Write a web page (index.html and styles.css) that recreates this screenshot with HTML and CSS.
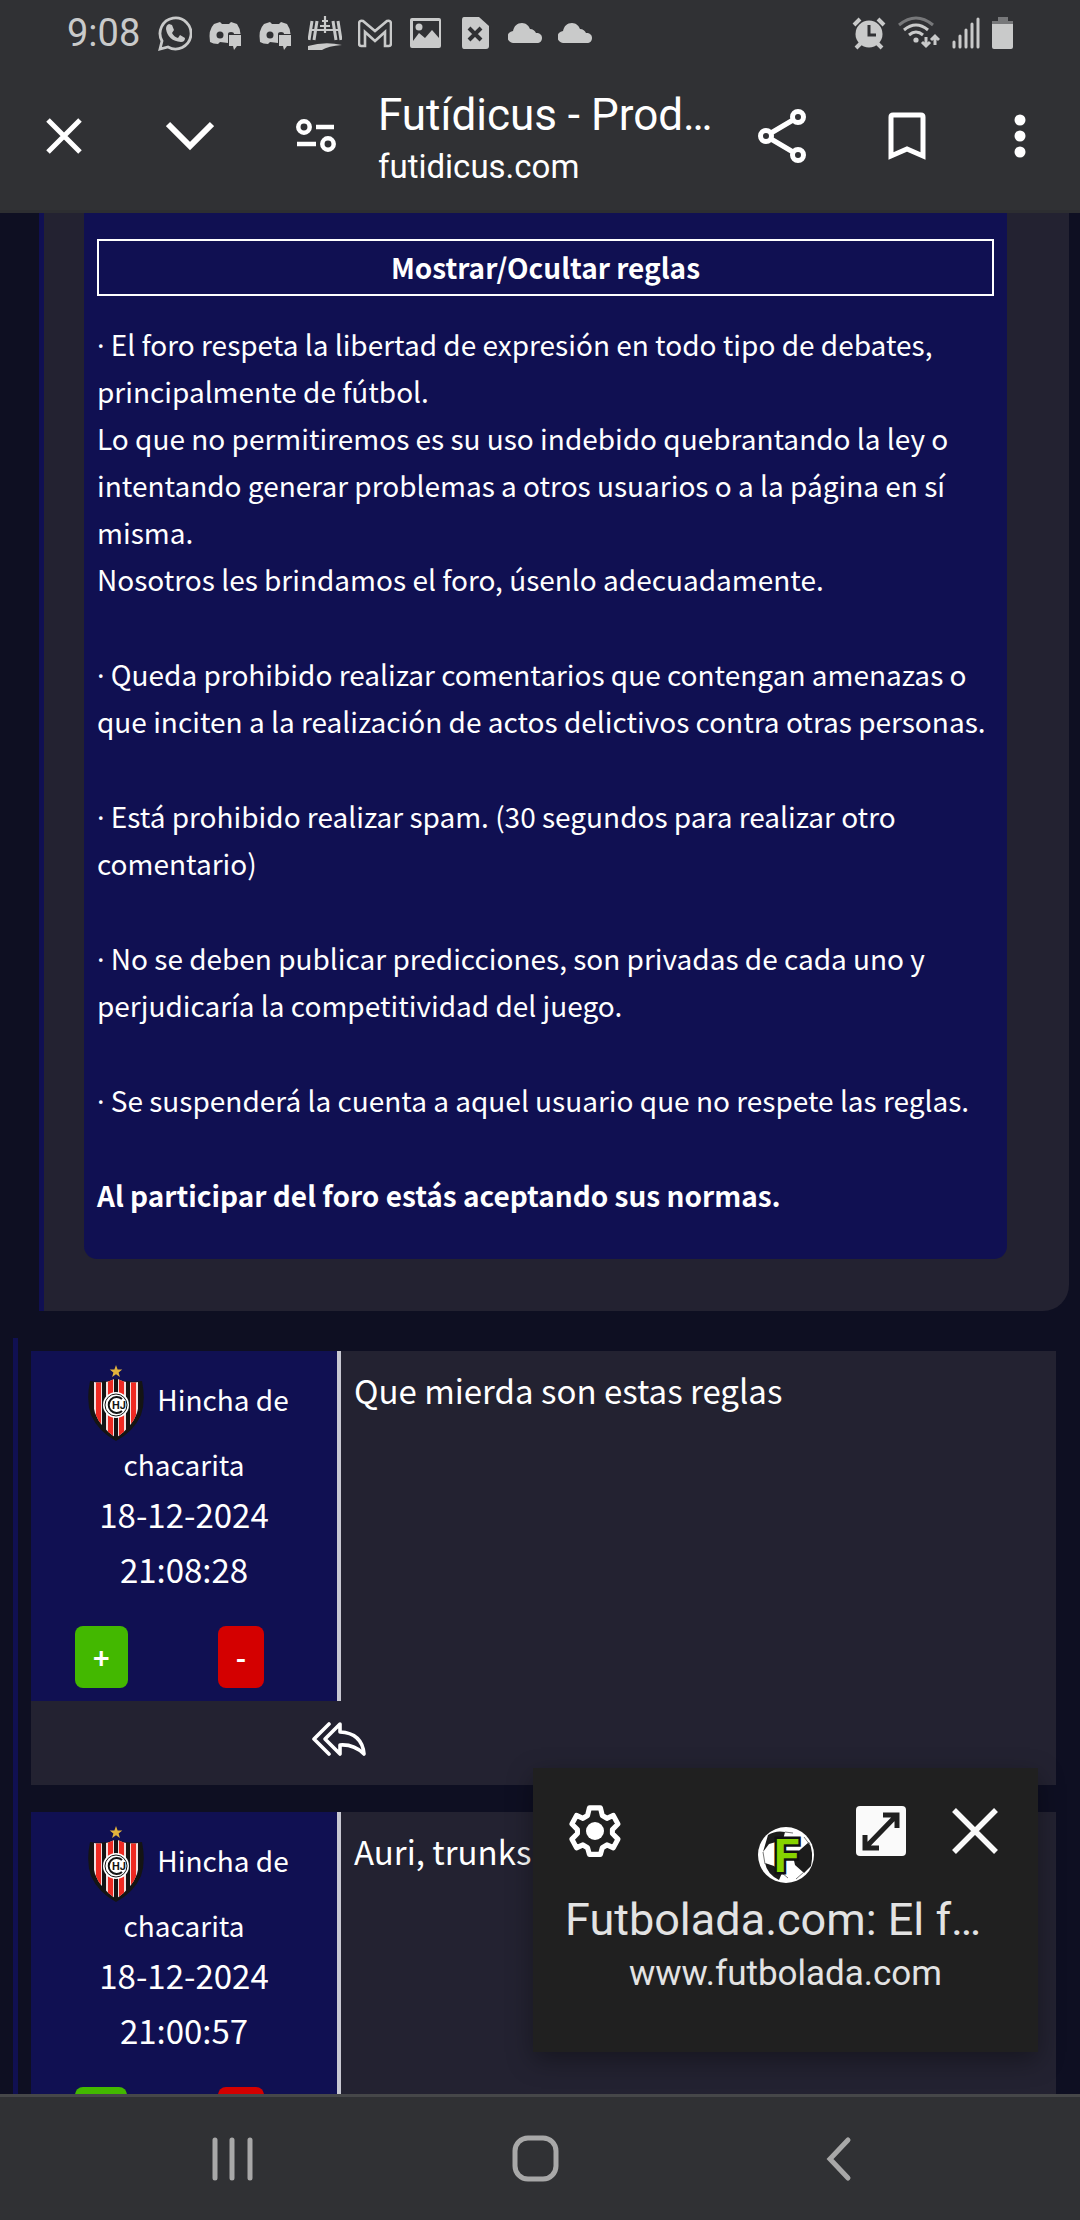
FILE: index.html
```html
<!DOCTYPE html>
<html lang="es">
<head>
<meta charset="utf-8">
<meta name="viewport" content="width=device-width, initial-scale=1">
<title>Futídicus - Foro</title>
<link rel="stylesheet" href="styles.css">
</head>
<body>
<svg width="0" height="0" class="defs" aria-hidden="true">
  <defs>
    <clipPath id="shield"><path d="M6 17Q18 19 28 13Q38 19 50 17Q53 36 49 48Q44 62 28 73Q12 62 7 48Q3 36 6 17Z"/></clipPath>
    <symbol id="crest" viewBox="0 0 56 76">
      <path d="M28 0l1.600 4.400 4.700.1-3.700 2.900 1.300 4.500L28 9.200l-3.900 2.700 1.300-4.500-3.700-2.900 4.700-.1z" fill="#e2b33c"/>
      <path d="M2 16Q16 18 28 14Q40 18 54 16Q58 36 53 50Q46 66 28 76Q10 66 3 50Q-2 36 2 16Z" fill="#141414"/>
      <g clip-path="url(#shield)">
        <path d="M6 12h8v60H6zM18 12h8v62h-8zM30 12h8v62h-8zM42 12h8v60h-8z" fill="#f3dfdf"/>
        <path d="M8 12h5v60H8zM20 12h5v62h-5zM31 12h5v62h-5zM43 12h5v60h-5z" fill="#ee2a22"/>
      </g>
      <circle cx="28" cy="40" r="13" fill="#fff"/>
      <circle cx="28" cy="40" r="11" fill="none" stroke="#141414"/>
      <path d="M34 34a8 8 0 1 0 0 12" fill="none" stroke="#141414" stroke-width="2"/>
      <text x="24" y="44" class="crest-text">HJ</text>
    </symbol>
    <symbol id="discord" viewBox="0 0 34 34">
      <path d="M2 26Q0 14 6 8l6-2 2 2h7l2-2 6 2q3 4 3.500 10H20V27l-8-1-2 2q-5 0-8-2z" fill="#c9caca"/>
      <ellipse cx="12" cy="19" rx="3.500" ry="3.500" fill="#303134"/>
      <ellipse cx="23" cy="18" rx="3" ry="2" fill="#303134"/>
      <path d="M21 19h12v11h-4l-3 4-1-4h-4z" fill="#c9caca"/>
    </symbol>
    <symbol id="cloud" viewBox="0 0 34 20">
      <path d="M6 20a6 6 0 0 1-1-12C6 3 9 0 14 0c4 0 7 3 8 6 3 0 5 2 6 4 4 0 6 2 6 5s-2 5-5 5z" fill="#c9caca"/>
    </symbol>
  </defs>
</svg>

<header class="browser-top">
  <div class="status">
    <time class="clock">9:08</time>
    <div class="notices">
      <svg width="34" height="36" viewBox="0 0 34 36"><path d="M2 34l2-8A15.500 15.500 0 1 1 10 32z" fill="none" stroke="#c9caca" stroke-width="2.800"/><path d="M11 9l3 1 2 5-2 3q2 4 6 5l2-3 5 3q0 4-4 4Q10 26 8 14q0-4 3-5z" fill="#c9caca"/></svg>
      <svg width="34" height="36"><use href="#discord"/></svg>
      <svg width="34" height="36"><use href="#discord"/></svg>
      <svg width="34" height="36" viewBox="0 0 34 36"><path d="M4 6L1 25M9 6L6 25M25 6l3 19M30 6l3 19" stroke="#c9caca" stroke-width="3"/><path d="M4 15h26M17 1v17M14 6h6M12 11h10" stroke="#c9caca" stroke-width="2.200"/><path d="M0 31q17-5 34-1-14 1-20 5H0z" fill="#c9caca"/></svg>
      <svg width="34" height="36" viewBox="0 0 34 36"><path d="M1 9q0-4 4-3l12 10L29 6q4-1 4 3v19q0 3-2 3h-4V17L17 26 7 17v14H3q-2 0-2-3z" fill="none" stroke="#c9caca" stroke-width="2.600"/></svg>
      <svg width="34" height="36" viewBox="0 0 34 36"><path d="M4 3h27q2 0 2 2v26q0 2-2 2H4q-2 0-2-2V5q0-2 2-2zm1 23l6-8 6 5 7-8 7 8V6H5z" fill="#c9caca" fill-rule="evenodd"/><circle cx="11" cy="12" r="3.500" fill="#c9caca"/></svg>
      <svg width="34" height="36" viewBox="0 0 34 36"><path d="M6 2h15l10 9v20q0 3-3 3H6q-2 0-2-3V5q0-3 2-3z" fill="#c9caca"/><path d="M11 13l12 12M23 13L11 25" stroke="#303134" stroke-width="4"/></svg>
      <svg width="34" height="20"><use href="#cloud"/></svg>
      <svg width="34" height="20"><use href="#cloud"/></svg>
    </div>
    <div class="signals">
      <svg width="34" height="34" viewBox="0 0 34 34"><circle cx="17" cy="18" r="13.500" fill="#c9caca"/><path d="M2 9l6-6M32 9l-6-6M4 32l5-5M30 32l-5-5" stroke="#c9caca" stroke-width="4"/><path d="M17 9v10h7" fill="none" stroke="#303134" stroke-width="3"/></svg>
      <svg width="42" height="34" viewBox="0 0 42 34"><path d="M1 9Q18-5 35 9" fill="none" stroke="#77787a" stroke-width="3"/><path d="M6 14q12-10 24 0M11 19q7-6 14 0" fill="none" stroke="#c9caca" stroke-width="3"/><circle cx="18" cy="24" r="2.600" fill="#c9caca"/><path d="M28 21v9M24 26l4 4 4-4M37 29v-9M33 24l4-4 4 4" fill="none" stroke="#c9caca" stroke-width="3"/></svg>
      <svg width="28" height="34" viewBox="0 0 28 34"><path d="M2 26v5M8 20v11M14 14v17M20 8v23M26 3v28" stroke="#c9caca" stroke-width="3" stroke-linecap="round"/></svg>
      <svg width="22" height="34" viewBox="0 0 22 34"><path d="M6 1h10v4h5v4H0V5h6z" fill="#77787a"/><path d="M0 8h21v23q0 2-2 2H2q-2 0-2-2z" fill="#c9caca"/></svg>
    </div>
  </div>
  <div class="toolbar">
    <button class="icon-btn close" aria-label="Cerrar"><svg width="38" height="38" viewBox="0 0 38 38"><path d="M3 3l32 32M35 3L3 35" stroke="#fff" stroke-width="5"/></svg></button>
    <button class="icon-btn down" aria-label="Minimizar"><svg width="48" height="38" viewBox="0 0 48 38"><path d="M2 7l22 22L46 7" fill="none" stroke="#fff" stroke-width="6"/></svg></button>
    <button class="icon-btn tune" aria-label="Información del sitio"><svg width="40" height="34" viewBox="0 0 40 34"><g fill="none" stroke="#fff" stroke-width="4.500"><circle cx="8" cy="8" r="5.700"/><circle cx="32" cy="25" r="5.700"/><path d="M20 8h18M1 25h19"/></g></svg></button>
    <div class="site">
      <div class="site-title">Futídicus - Prod…</div>
      <div class="site-url">futidicus.com</div>
    </div>
    <button class="icon-btn share" aria-label="Compartir"><svg width="48" height="54" viewBox="0 0 48 54"><g fill="none" stroke="#fff" stroke-width="5"><circle cx="40" cy="8" r="5.500"/><circle cx="8" cy="27" r="5.500"/><circle cx="40" cy="46" r="5.500"/><path d="M13 24l22-13M13 30l22 13"/></g></svg></button>
    <button class="icon-btn mark" aria-label="Guardar"><svg width="38" height="48" viewBox="0 0 38 48"><path d="M3 44V5q0-2 2-2h28q2 0 2 2v39l-16-7z" fill="none" stroke="#fff" stroke-width="5"/></svg></button>
    <button class="icon-btn more" aria-label="Más opciones"><svg width="12" height="44" viewBox="0 0 12 44"><g fill="#fff"><circle cx="6" cy="6" r="5.500"/><circle cx="6" cy="22" r="5.500"/><circle cx="6" cy="38" r="5.500"/></g></svg></button>
  </div>
</header>

<main class="page">
  <section class="panel">
    <div class="rules">
      <button class="rules-toggle">Mostrar/Ocultar reglas</button>
      <div class="rules-text">
        <p><span class="dot">·</span> El foro respeta la libertad de expresión en todo tipo de debates, principalmente de fútbol.<br>Lo que no permitiremos es su uso indebido quebrantando la ley o intentando generar problemas a otros usuarios o a la página en sí misma.<br>Nosotros les brindamos el foro, úsenlo adecuadamente.</p>
        <p><span class="dot">·</span> Queda prohibido realizar comentarios que contengan amenazas o que inciten a la realización de actos delictivos contra otras personas.</p>
        <p><span class="dot">·</span> Está prohibido realizar spam. (30 segundos para realizar otro comentario)</p>
        <p><span class="dot">·</span> No se deben publicar predicciones, son privadas de cada uno y perjudicaría la competitividad del juego.</p>
        <p><span class="dot">·</span> Se suspenderá la cuenta a aquel usuario que no respete las reglas.</p>
        <p><strong>Al participar del foro estás aceptando sus normas.</strong></p>
      </div>
    </div>
  </section>

  <section class="posts">
    <article class="post">
      <div class="author">
        <div class="name"><svg class="crest" width="56" height="76"><use href="#crest"/></svg>Hincha de chacarita</div>
        <time class="date">18-12-2024<br>21:08:28</time>
        <div class="votes"><button class="vote up">+</button><button class="vote down-vote">-</button></div>
      </div>
      <p class="message">Que mierda son estas reglas</p>
      <div class="actions"><button class="icon-btn" aria-label="Responder"><svg width="54" height="36" viewBox="0 0 54 36"><g fill="none" stroke="#fff" stroke-width="3.600" stroke-linecap="round" stroke-linejoin="round"><path d="M17 3L2 18l15 15"/><path d="M28 3L13 18l15 15v-9q14-1 24 9Q50 12 28 11z"/></g></svg></button></div>
    </article>
    <article class="post">
      <div class="author">
        <div class="name"><svg class="crest" width="56" height="76"><use href="#crest"/></svg>Hincha de chacarita</div>
        <time class="date">18-12-2024<br>21:00:57</time>
        <div class="votes"><button class="vote up" aria-label="Me gusta"></button><button class="vote down-vote" aria-label="No me gusta"></button></div>
      </div>
      <p class="message">Auri, trunks</p>
    </article>
  </section>
</main>

<aside class="popup">
  <div class="popup-bar">
    <button class="icon-btn gear" aria-label="Ajustes"><svg width="52" height="54" viewBox="0 0 52 54"><path d="M20 3h12l2 8 5 3 7-3 5 9-6 6v4l6 6-5 9-7-3-5 3-2 7H20l-2-7-5-3-7 3-5-9 6-6v-4l-6-6 5-9 7 3 5-3z" transform="translate(2 1) scale(.92 .95)" fill="none" stroke="#fff" stroke-width="5.500" stroke-linejoin="round"/><circle cx="26" cy="27" r="9" fill="#fff"/></svg></button>
    <svg class="ball" width="58" height="58" viewBox="0 0 58 58"><circle cx="29" cy="29" r="28" fill="#fff"/><path d="M11 9q8-5 17-3l-2 8-14 4-6 8zM44 23l8-7q5 10 2 24l-7 7-9-8-2-9zM8 37l9 3 8 7-3 7Q10 48 8 37z" fill="#1c1c1c"/><path d="M28 6l8 1M47 11l6 8M47 46l-8 7M25 47l6 5M6 26l2 12" stroke="#777" fill="none"/><text x="17" y="46" class="ball-letter">F</text></svg>
    <button class="icon-btn expand" aria-label="Expandir"><svg width="50" height="50" viewBox="0 0 50 50"><rect width="50" height="50" rx="4" fill="#fafafa"/><path d="M9 42L41 9M27 9h14v13M9 29v13h14" fill="none" stroke="#202020" stroke-width="5"/></svg></button>
    <button class="icon-btn" aria-label="Cerrar ventana"><svg width="46" height="46" viewBox="0 0 46 46"><path d="M2 2l42 42M44 2L2 44" stroke="#fafafa" stroke-width="5.500"/></svg></button>
  </div>
  <div class="popup-title">Futbolada.com: El f…</div>
  <div class="popup-url">www.futbolada.com</div>
</aside>

<nav class="system-nav">
  <button class="icon-btn" aria-label="Recientes"><svg width="42" height="48" viewBox="0 0 42 48"><path d="M3 5v38M20 5v38M38 5v38" stroke="#a8a8a8" stroke-width="5" stroke-linecap="round"/></svg></button>
  <button class="icon-btn" aria-label="Inicio"><svg width="48" height="48" viewBox="0 0 48 48"><rect x="3" y="3" width="41" height="41" rx="13" fill="none" stroke="#a8a8a8" stroke-width="5"/></svg></button>
  <button class="icon-btn" aria-label="Atrás"><svg width="42" height="48" viewBox="0 0 42 48"><path d="M30 5L12 24l18 19" fill="none" stroke="#a8a8a8" stroke-width="5" stroke-linecap="round"/></svg></button>
</nav>
</body>
</html>
```
FILE: styles.css
```css
* { box-sizing: border-box; }

body {
  margin: 0;
  height: 100vh;
  display: flex;
  flex-direction: column;
  position: relative;
  overflow: hidden;
  background: #0e0f22;
  color: #fff;
  font-family: "Noto Sans CJK SC", "Noto Sans", sans-serif;
}

p { margin: 0; }
svg { display: block; flex: none; }
.defs { position: absolute; }

button {
  margin: 0;
  padding: 0;
  border: 0;
  color: inherit;
  font: inherit;
}

.icon-btn { background: none; flex: none; }

/* Browser chrome */
.browser-top {
  flex: none;
  background: #303134;
  border-bottom: 3px solid #2d2e31;
  font-family: Roboto, sans-serif;
}

.status {
  display: flex;
  align-items: center;
  height: 66px;
  padding: 0 66px 0 67px;
}

.clock {
  width: 91px;
  color: #c9caca;
  font-size: 38px;
  line-height: 66px;
}

.notices { display: flex; align-items: center; gap: 16px; }
.signals { display: flex; align-items: center; gap: 12px; margin-left: auto; }

.toolbar {
  display: flex;
  align-items: center;
  height: 144px;
  padding: 0 54px 4px 45px;
}

.down { margin-left: 83px; }
.tune { margin-left: 82px; }
.site { flex: 1; min-width: 0; margin-left: 42px; padding-top: 6px; white-space: nowrap; }
.site-title { font-size: 44px; line-height: 56px; }
.site-url { font-size: 33px; line-height: 48px; }
.mark { margin-left: 82px; }
.more { margin-left: 88px; }

/* Forum page */
.page { flex: 1; min-height: 0; overflow: hidden; }

.panel {
  margin: 0 11px 0 39px;
  padding: 0 62px 52px 40px;
  border-left: 5px solid #101052;
  border-bottom-right-radius: 26px;
  background: #232231;
}

.rules {
  padding: 26px 13px 40px;
  border-radius: 0 0 13px 13px;
  background: #101052;
  font-size: 28px;
  line-height: 47px;
}

.rules-toggle {
  display: block;
  width: 100%;
  height: 57px;
  border: 2px solid #fff;
  background: none;
  font-weight: 700;
}

.rules-text {
  display: flex;
  flex-direction: column;
  gap: 48px;
  margin-top: 25px;
}

/* The CJK family draws the middle dot full-width */
.dot { font-family: "Noto Sans", sans-serif; line-height: 1; }

.posts {
  display: flex;
  flex-direction: column;
  gap: 27px;
  margin: 27px 0 0 13px;
  padding: 13px 24px 27px 13px;
  border-left: 5px solid #101052;
}

.post {
  display: grid;
  grid-template-columns: 310px 1fr;
  background: #232231;
}

.author {
  padding: 14px 0 13px;
  border-right: 4px solid #c8c8d2;
  background: #101052;
  text-align: center;
}

.name { padding: 0 40px; font-size: 28px; line-height: 46px; }
.crest { display: inline-block; vertical-align: middle; margin: 0 13px 0 9px; }
.crest-text { font: 700 11px Roboto, sans-serif; fill: #141414; }
.date { display: block; font-size: 33px; line-height: 55px; }

.votes {
  display: flex;
  justify-content: space-between;
  margin-top: 29px;
  padding: 0 73px 0 44px;
}

.vote {
  min-width: 46px;
  min-height: 62px;
  padding: 0 18px;
  border-radius: 8px;
  font-size: 28px;
  font-weight: 700;
  line-height: 62px;
}

.up { min-width: 52px; background: #43b800; }
.down-vote { background: #d40000; }

.message { padding: 12px 13px; font-size: 33px; line-height: 55px; }

.actions {
  grid-column: 1 / -1;
  height: 84px;
  padding: 20px 0 0 281px;
}

/* Floating mini window */
.popup {
  position: absolute;
  right: 42px;
  bottom: 168px;
  width: 505px;
  height: 284px;
  padding: 36px 32px 0;
  background: #202020;
  box-shadow: 0 8px 24px rgba(0, 0, 0, 0.35);
  color: #e3e3e3;
  font-family: Roboto, sans-serif;
  text-align: center;
}

.popup-bar { display: flex; align-items: center; height: 54px; padding-left: 4px; }
.ball { margin: 48px 0 0 136px; }
.ball-letter {
  font: 700 46px Roboto, sans-serif;
  fill: #86d300;
  stroke: #111;
  stroke-width: 5px;
  paint-order: stroke;
}
.expand { margin: 0 46px 0 41px; }
.popup-title {
  margin-top: 34px;
  font-size: 45px;
  line-height: 56px;
  text-align: left;
  white-space: nowrap;
}
.popup-url { font-size: 35px; line-height: 52px; }

/* Android navigation */
.system-nav {
  flex: none;
  display: flex;
  justify-content: space-between;
  align-items: center;
  height: 126px;
  padding: 0 220px 0 212px;
  border-top: 3px solid #464749;
  background: #303134;
}
```
